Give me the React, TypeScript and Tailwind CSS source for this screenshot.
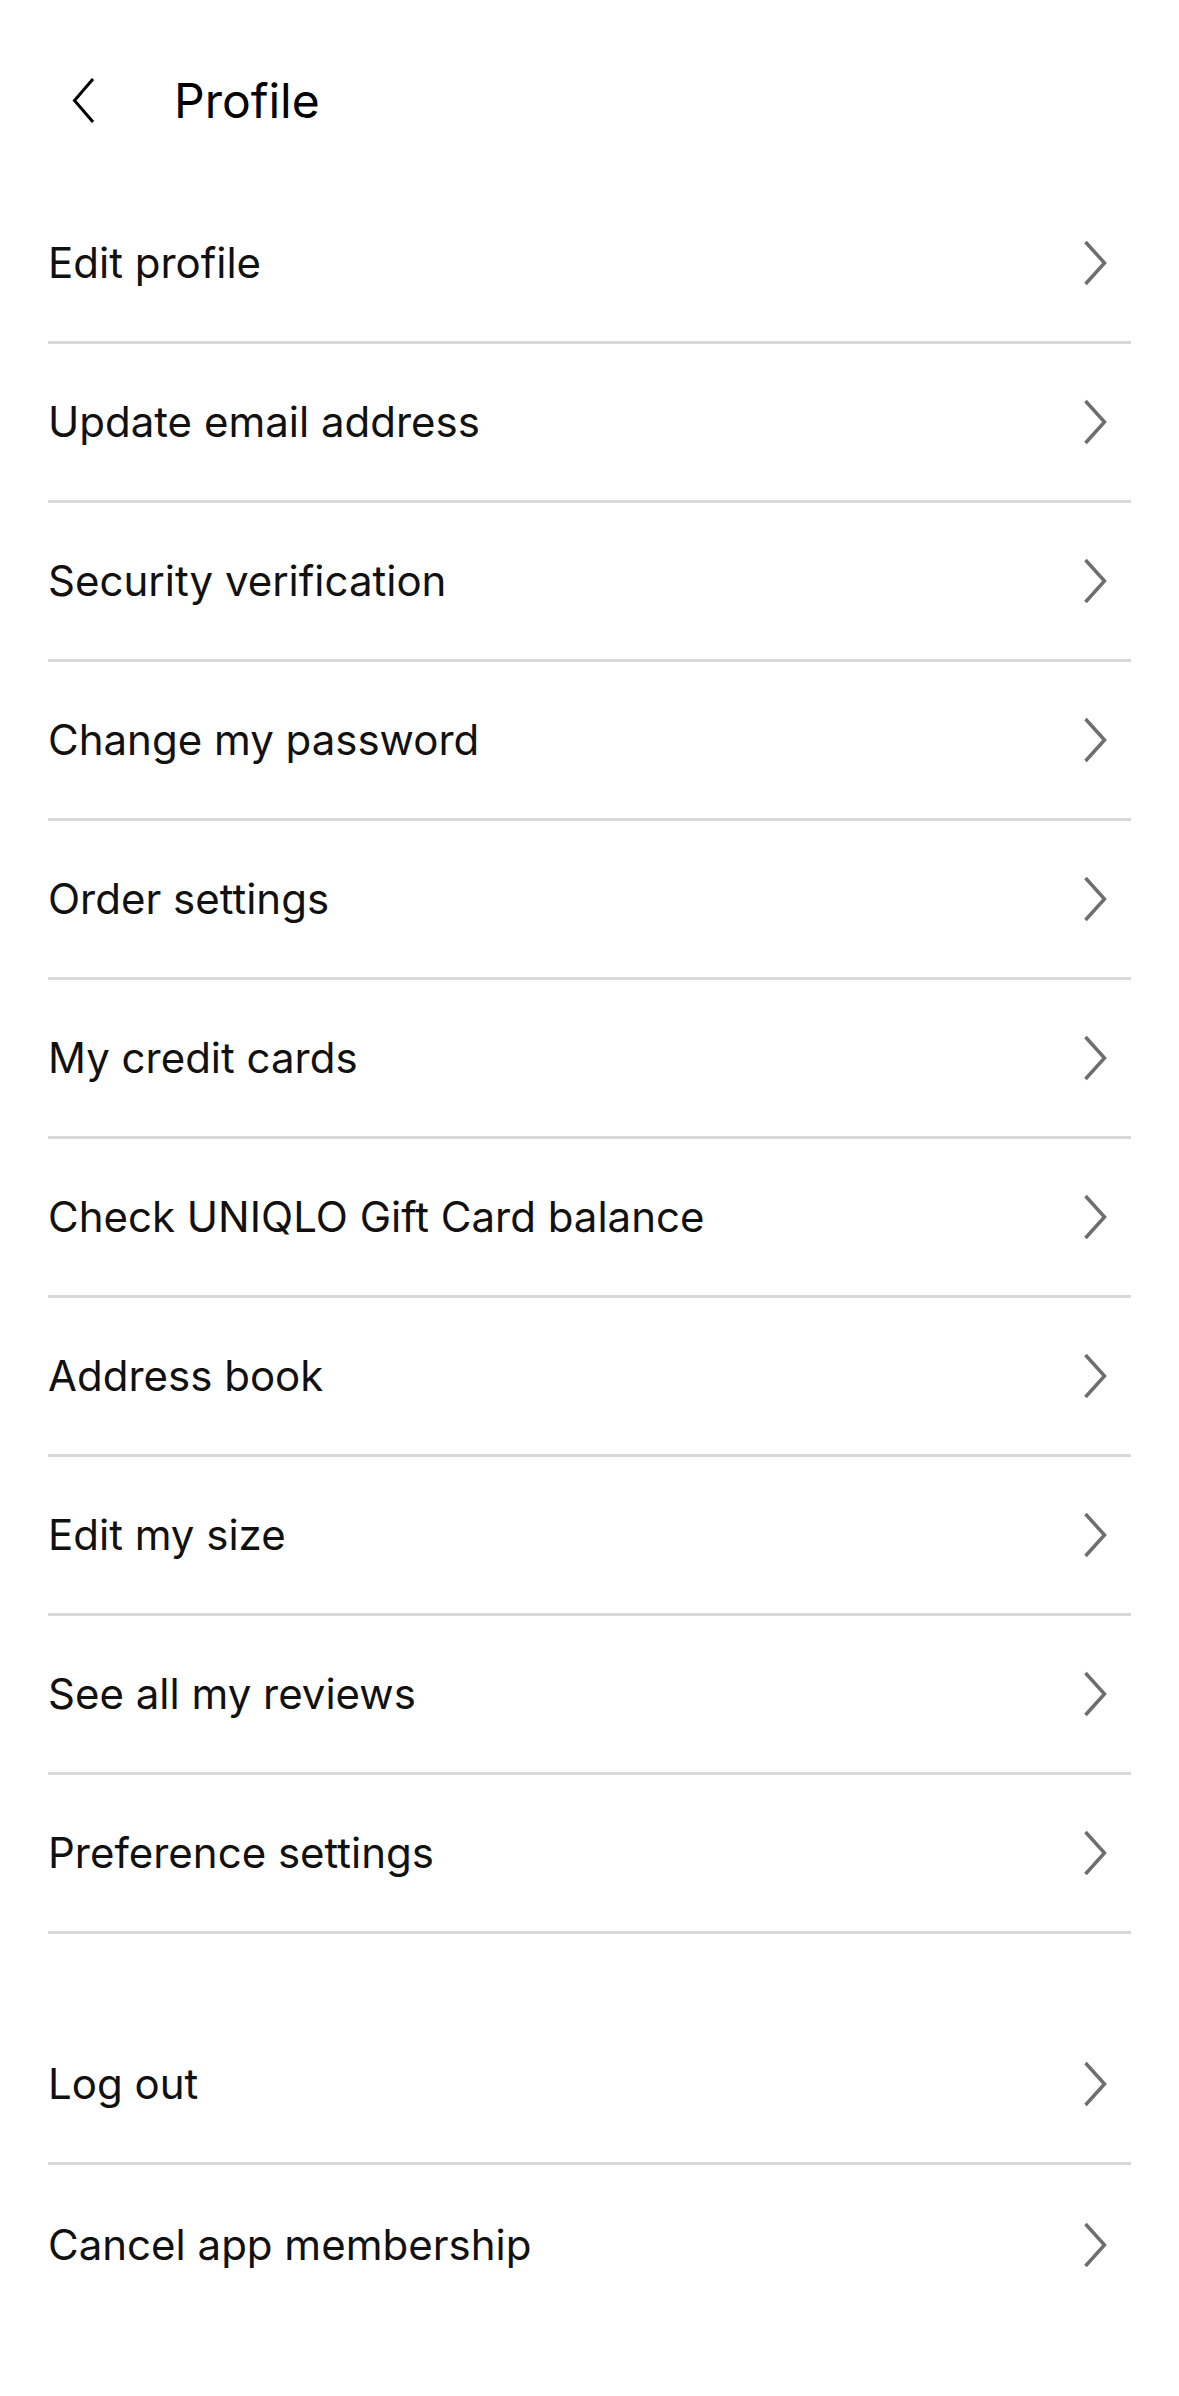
import React from 'react'

const mainItems = [
  'Edit profile',
  'Update email address',
  'Security verification',
  'Change my password',
  'Order settings',
  'My credit cards',
  'Check UNIQLO Gift Card balance',
  'Address book',
  'Edit my size',
  'See all my reviews',
  'Preference settings',
]

const accountItems = ['Log out', 'Cancel app membership']

function ChevronRight() {
  return (
    <svg width="24" height="48" viewBox="0 0 24 48" fill="none" className="shrink-0">
      <path d="M2.5 3 L21.5 24 L2.5 45" stroke="#6e6e6e" strokeWidth="3.5" />
    </svg>
  )
}

function Row({ label, last }: { label: string; last?: boolean }) {
  return (
    <div
      className={`flex items-center justify-between h-[159px] ${last ? '' : 'border-b-[3px] border-[#d9d9d9]'}`}
    >
      <span className="text-[42px] leading-none text-[#111111]">{label}</span>
      <div className="mr-[24px]">
        <ChevronRight />
      </div>
    </div>
  )
}

export default function App() {
  return (
    <div className="min-h-[2396px] w-full bg-white font-['Inter','Noto_Sans',sans-serif]">
      {/* header */}
      <div className="flex items-center h-[185px] pt-[16px]">
        <button className="ml-[71px]">
          <svg width="24" height="48" viewBox="0 0 24 48" fill="none">
            <path d="M22 2 L3.5 23.5 L22 45" stroke="#000000" strokeWidth="3" />
          </svg>
        </button>
        <h1 className="ml-[79px] text-[48px] leading-none font-normal text-black">Profile</h1>
      </div>

      <div className="px-[48px]">
        {mainItems.map((item) => (
          <Row key={item} label={item} />
        ))}

        <div className="mt-[72px]">
          {accountItems.map((item, i) => (
            <Row key={item} label={item} last={i === accountItems.length - 1} />
          ))}
        </div>
      </div>
    </div>
  )
}
